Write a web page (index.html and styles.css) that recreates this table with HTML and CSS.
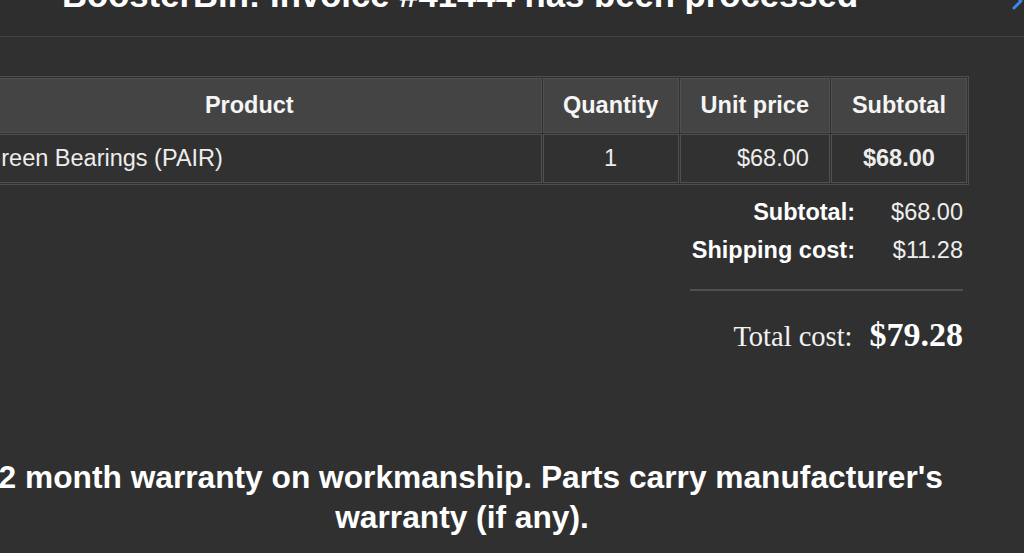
FILE: index.html
```html
<!DOCTYPE html>
<html>
<head>
<meta charset="utf-8">
<link rel="stylesheet" href="styles.css">
</head>
<body>
<header class="topbar">
  <h1 class="title">BoosterBin: Invoice #41444 has been processed</h1>
  <svg class="chev" width="14" height="14" viewBox="0 0 14 14"><path d="M4 -6 L11 1 L4 8" fill="none" stroke="#3b87ea" stroke-width="3" stroke-linecap="round" stroke-linejoin="round"/></svg>
</header>
<main class="content">
  <table class="items">
    <thead>
      <tr>
        <th class="c-product">Product</th>
        <th class="c-qty">Quantity</th>
        <th class="c-unit">Unit price</th>
        <th class="c-sub">Subtotal</th>
      </tr>
    </thead>
    <tbody>
      <tr>
        <td class="c-product left">Green Bearings (PAIR)</td>
        <td class="c-qty center">1</td>
        <td class="c-unit right">$68.00</td>
        <td class="c-sub center strong">$68.00</td>
      </tr>
    </tbody>
  </table>
  <section class="totals">
    <div class="trow"><span class="tlabel">Subtotal:</span><span class="tval">$68.00</span></div>
    <div class="trow"><span class="tlabel">Shipping cost:</span><span class="tval">$11.28</span></div>
    <hr class="rule">
    <div class="grand"><span class="glabel">Total cost:</span><span class="gval">$79.28</span></div>
  </section>
  <p class="note">12 month warranty on workmanship. Parts carry manufacturer's warranty (if any).</p>
</main>
</body>
</html>
```
FILE: styles.css
```css
html, body {
  margin: 0;
  padding: 0;
  background: #303030;
  overflow: hidden;
}
body {
  width: 1024px;
  height: 553px;
  font-family: "Liberation Sans", Arial, sans-serif;
  color: #f2f2f2;
}
.topbar {
  position: relative;
  height: 36px;
  padding-right: 104px;
  background: #2e2e2e;
  border-bottom: 1px solid #404040;
  overflow: hidden;
  display: flex;
  justify-content: center;
}
.title {
  margin: -25px 0 0 0;
  font-size: 34.7px;
  line-height: 40px;
  font-weight: bold;
  color: #ffffff;
  white-space: nowrap;
}
.chev {
  position: absolute;
  right: 0;
  top: 0;
}
.content {
  width: 1014px;
  margin-left: -45px;
}
.items {
  margin-top: 39px;
  width: 1014px;
  border-collapse: separate;
  border-spacing: 1px;
  border: 1px solid #4e4e4e;
  table-layout: fixed;
  font-size: 23.5px;
}
.items th, .items td {
  border: 1px solid #505050;
}
.items th {
  background: #444444;
  height: 53px;
  padding: 0;
  font-weight: bold;
  color: #f5f5f5;
  text-align: center;
}
.items td {
  background: #313131;
  height: 47px;
  padding: 0;
  color: #ededed;
}
.c-product { width: 582px; }
.c-qty { width: 134px; }
.c-unit { width: 148px; }
.c-sub { width: 134px; }
.left { text-align: left; padding-left: 25px !important; }
.center { text-align: center; }
.right { text-align: right; padding-right: 20px !important; }
.strong { font-weight: bold; color: #ffffff; }
.totals {
  width: 273px;
  margin: 8px 6px 0 auto;
  font-size: 23.5px;
}
.trow {
  display: flex;
  justify-content: flex-end;
  line-height: 38px;
}
.tlabel {
  font-weight: bold;
  color: #ffffff;
  text-align: right;
  margin-right: 1px;
}
.tval {
  width: 107px;
  text-align: right;
  color: #eeeeee;
}
.rule {
  margin: 20px 0 0 0;
  border: 0;
  height: 2px;
  background: #505050;
}
.grand {
  display: flex;
  justify-content: flex-end;
  align-items: baseline;
  gap: 17px;
  margin-top: 22px;
  line-height: 44px;
  font-family: "Liberation Serif", "Times New Roman", serif;
  color: #f2f2f2;
}
.glabel { font-size: 28.5px; }
.gval { font-size: 34px; font-weight: bold; color: #ffffff; }
.note {
  margin: 98px 0 0 0;
  text-align: center;
  font-size: 31.7px;
  line-height: 40px;
  font-weight: bold;
  color: #ffffff;
}
```
